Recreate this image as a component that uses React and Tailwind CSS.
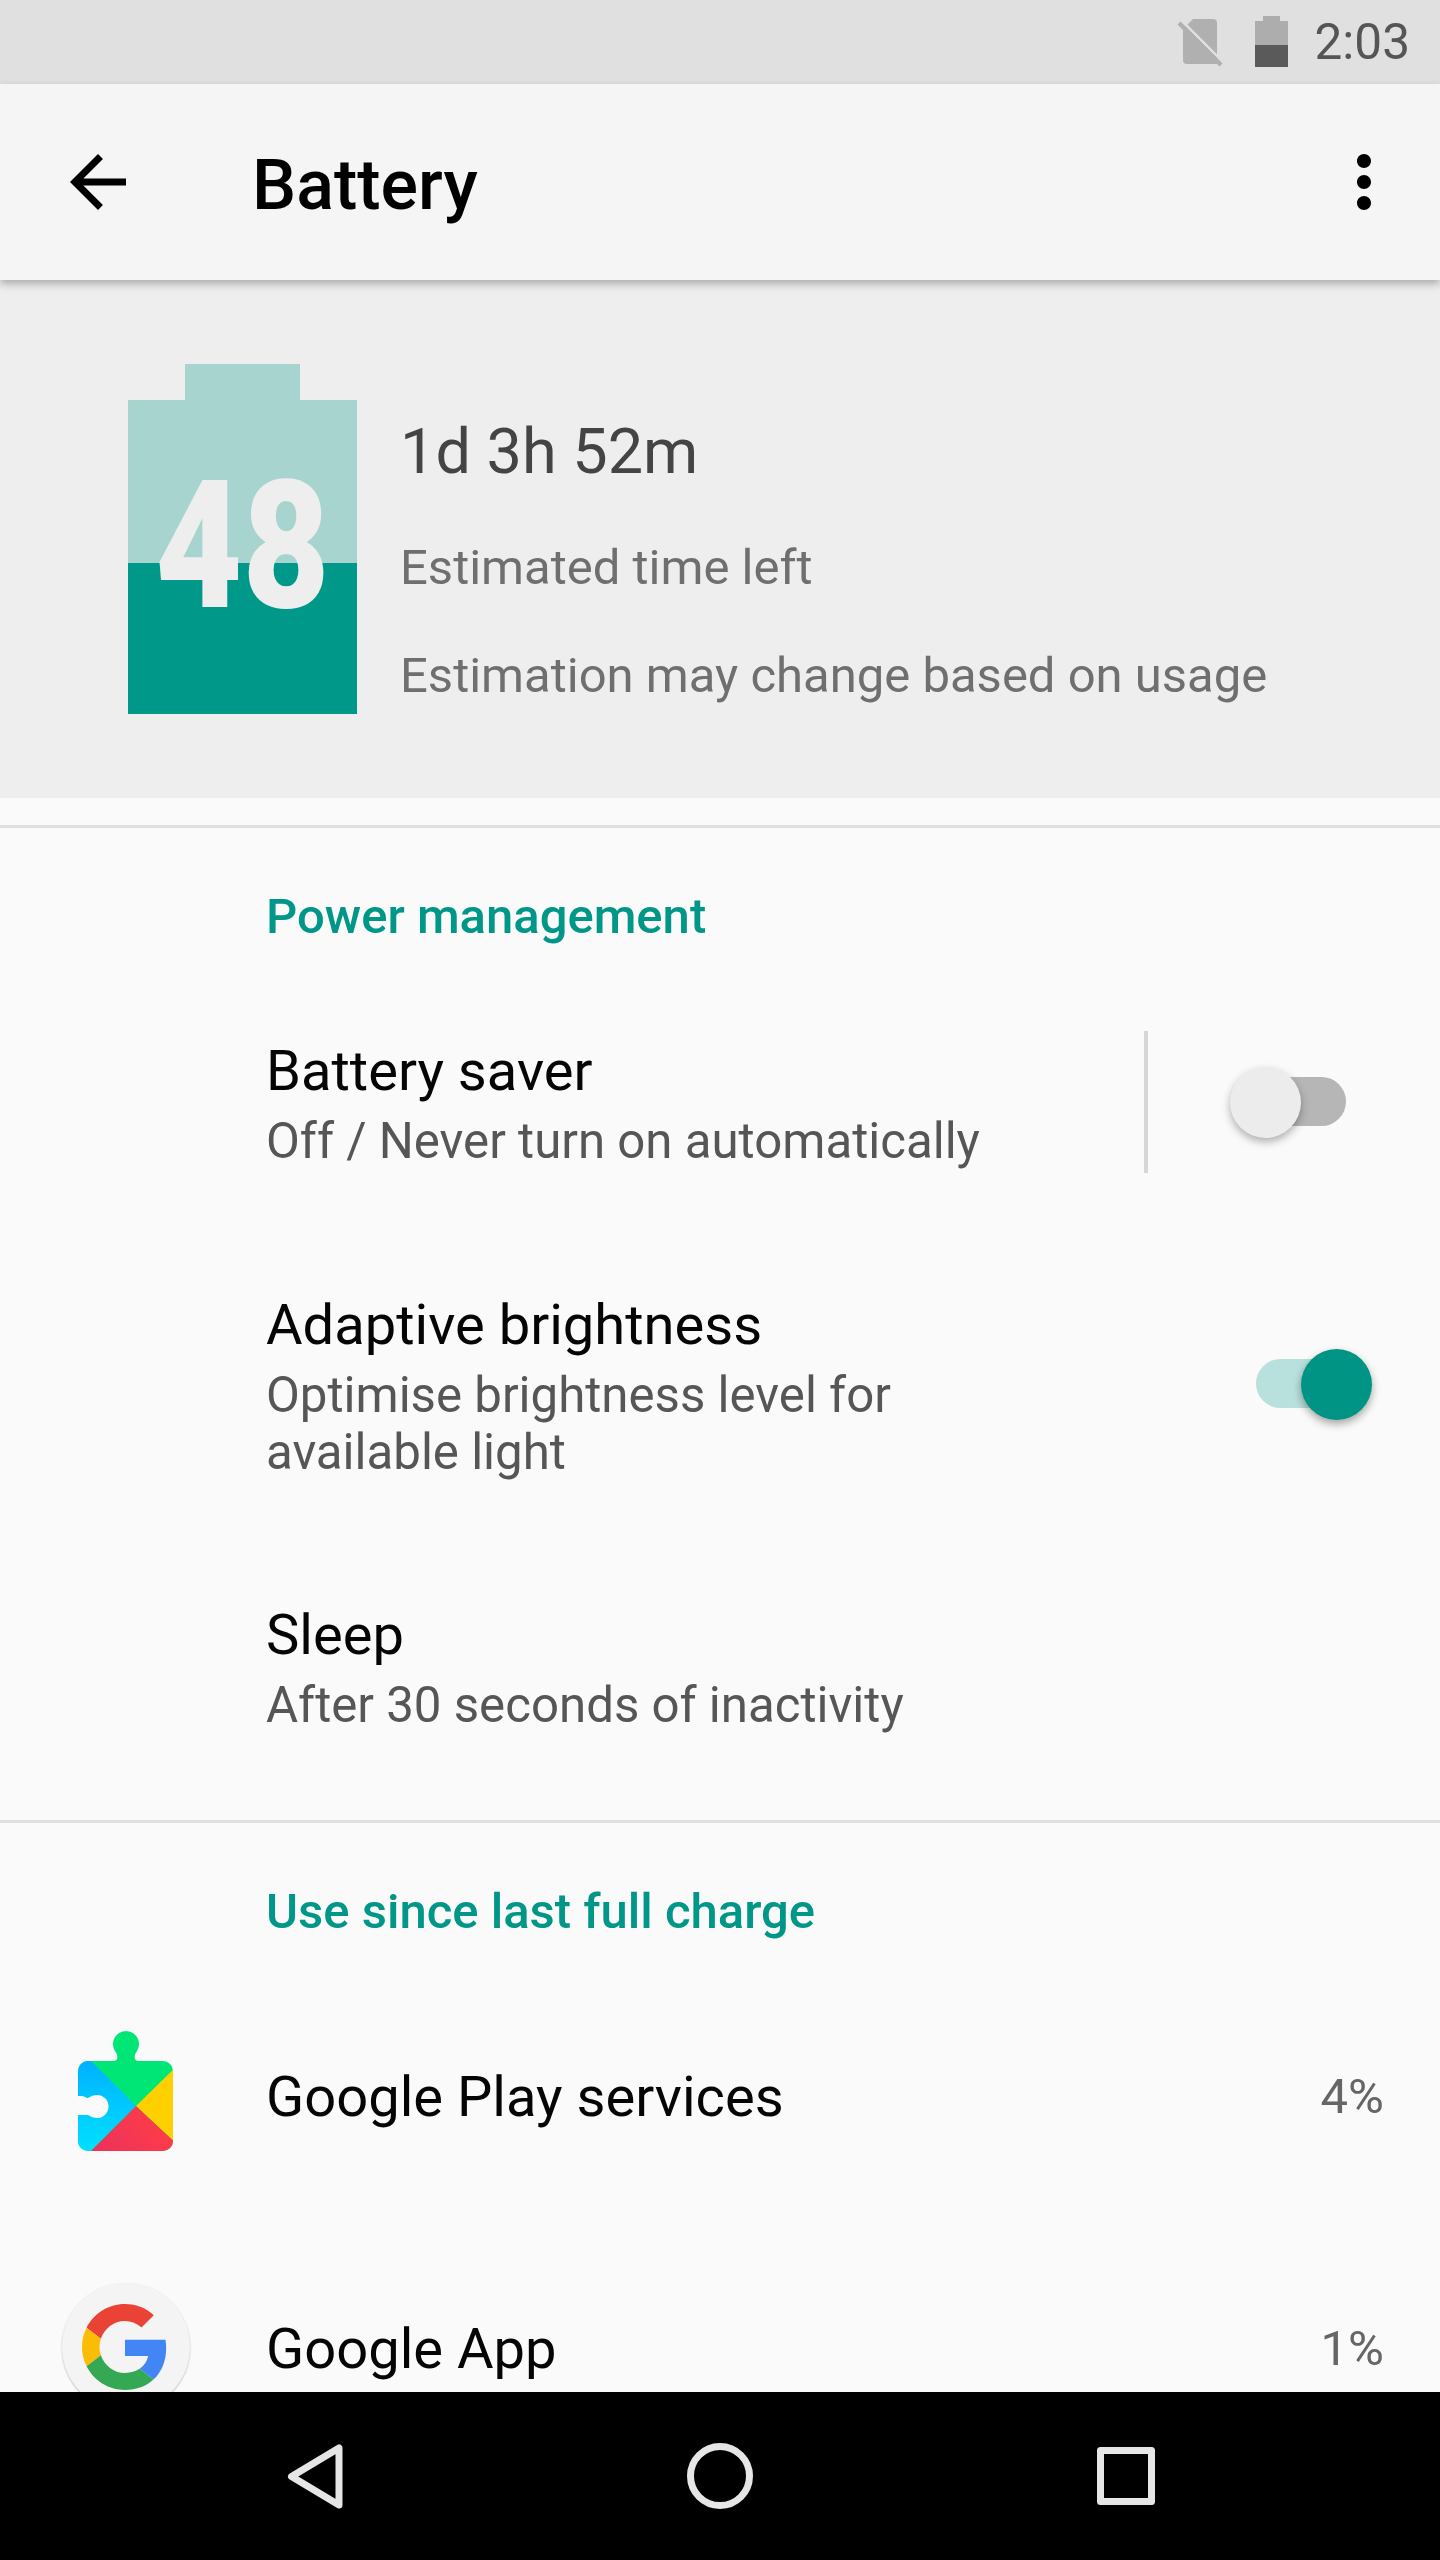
function Switch({ on }) {
  return (
    <div className="relative h-[71px] w-[116px] shrink-0">
      <div className={on ? "absolute left-0 top-[10px] h-[49px] w-[102px] rounded-full bg-[#b8e0dc]" : "absolute right-0 top-[10px] h-[49px] w-[102px] rounded-full bg-[#b6b6b6]"} />
      <div className={on ? "absolute right-0 top-0 h-[71px] w-[71px] rounded-full bg-[#009485] shadow-[0_4px_8px_rgba(0,0,0,0.35)]" : "absolute left-0 top-0 h-[71px] w-[71px] rounded-full bg-[#ececec] shadow-[0_4px_8px_rgba(0,0,0,0.3)]"} />
    </div>
  );
}

function SettingText({ title, lines }) {
  return (
    <div className="min-w-0 flex-1">
      <div className="text-[56.1px] leading-[84px] text-[#050505]">{title}</div>
      {lines.map((l) => (
        <div key={l} className="text-[49.2px] leading-[57px] text-[#565656]">{l}</div>
      ))}
    </div>
  );
}

function SectionHeader({ children }) {
  return <div className="pl-[266px] pt-[61px] text-[49px] font-medium leading-[56px] text-[#009688]">{children}</div>;
}

function Divider() {
  return <div className="h-[3px] bg-[#e0e0e0]" />;
}

function PlayIcon() {
  return (
    <svg width="180" height="180" viewBox="0 0 180 180" className="shrink-0">
      <defs>
        <clipPath id="puzzle">
          <path d="M38 70a10 10 0 0 1 10-10h25c6 0 5-6 2-10a13 13 0 1 1 22 0c-3 4-4 10 2 10h24a10 10 0 0 1 10 10v70a10 10 0 0 1-10 10H48a10 10 0 0 1-10-10Z" />
        </clipPath>
        <linearGradient id="blueg" x1="0" y1="0" x2="0" y2="1">
          <stop offset="0" stopColor="#00aeff" />
          <stop offset="1" stopColor="#00e3ff" />
        </linearGradient>
        <linearGradient id="redg" x1="0" y1="1" x2="1" y2="0.6">
          <stop offset="0" stopColor="#e8305f" />
          <stop offset="1" stopColor="#ff3d47" />
        </linearGradient>
      </defs>
      <g clipPath="url(#puzzle)">
        <rect x="30" y="25" width="110" height="130" fill="#00e676" />
        <polygon points="30,55 51,60 96,105 51,150 30,155" fill="url(#blueg)" />
        <polygon points="140,62 96,105 140,146" fill="#ffd000" />
        <polygon points="51,150 96,105 140,146 140,155 45,155" fill="url(#redg)" />
      </g>
      <path d="M36 95h5c3 0 5 2 7 2c3-2 6-3 9-3a11 11 0 0 1 0 23c-3 0-6-1-9-3-2 0-4 0-7 0h-5Z" fill="#fafafa" />
    </svg>
  );
}

function GoogleIcon() {
  return (
    <div className="flex h-[128px] w-[128px] shrink-0 items-center justify-center rounded-full bg-[#f4f4f4] shadow-[0_1px_2px_rgba(0,0,0,0.25)]">
      <svg width="86" height="86" viewBox="0 0 48 48" className="-ml-[2px]">
        <path fill="#EA4335" d="M24 9.500c3.540 0 6.710 1.220 9.210 3.600l6.850-6.850C35.900 2.380 30.470 0 24 0 14.620 0 6.510 5.380 2.560 13.220l7.980 6.190C12.430 13.720 17.740 9.500 24 9.500z" />
        <path fill="#4285F4" d="M46.980 24.550c0-1.570-.15-3.090-.38-4.550H24v9.020h12.940c-.58 2.960-2.260 5.480-4.780 7.180l7.730 6c4.510-4.180 7.090-10.360 7.090-17.650z" />
        <path fill="#FBBC05" d="M10.530 28.590c-.48-1.450-.76-2.990-.76-4.590s.27-3.140.76-4.590l-7.980-6.190C.92 16.460 0 20.120 0 24c0 3.880.92 7.540 2.560 10.780l7.970-6.190z" />
        <path fill="#34A853" d="M24 48c6.480 0 11.930-2.130 15.890-5.810l-7.730-6c-2.150 1.450-4.920 2.300-8.160 2.300-6.260 0-11.570-4.220-13.470-9.910l-7.980 6.190C6.510 42.620 14.620 48 24 48z" />
      </svg>
    </div>
  );
}

function BatteryGraphic() {
  return (
    <div className="relative h-[350px] w-[229px] shrink-0">
      <div className="mx-auto h-[36px] w-[115px] bg-[#a8d4d0]" />
      <div className="h-[163px] bg-[#a8d4d0]" />
      <div className="h-[151px] bg-[#009889]" />
      <div className="absolute left-0 right-0 top-[93px] scale-x-[0.84] text-center text-[179px] font-black leading-[179px] text-[#eeeeee]">48</div>
    </div>
  );
}

export default function App() {
  return (
    <div className="flex h-[2560px] w-[1440px] flex-col overflow-hidden bg-[#fafafa] font-['Roboto',sans-serif]">
      <div className="flex h-[84px] shrink-0 items-center justify-end bg-[#e0e0e0] pr-[30px]">
        <svg width="46" height="50" viewBox="0 0 46 50" className="mt-[2px]">
          <path d="M16 1H36a4 4 0 0 1 4 4V46H10a4 4 0 0 1-4-4V11Z" fill="#b0b0b0" />
          <path d="M4.500 2.500 46.500 44.500" stroke="#e0e0e0" strokeWidth="2.500" />
          <path d="M2 5 44 47" stroke="#b0b0b0" strokeWidth="4.500" />
        </svg>
        <svg width="33" height="51" viewBox="0 0 33 51" className="ml-[32px] mt-[-1px]">
          <path d="M8 0h17v5h8v24H0V5h8Z" fill="#adadad" />
          <rect x="0" y="29" width="33" height="22" fill="#5a5a5a" />
        </svg>
        <div className="ml-[27px] text-[49.5px] leading-[56px] text-[#555555]">2:03</div>
      </div>

      <div className="relative z-10 flex h-[196px] shrink-0 items-center bg-[#f5f5f5] pl-[56px] pr-[34px] shadow-[0_4px_8px_rgba(0,0,0,0.28)]">
        <svg width="84" height="84" viewBox="0 0 24 24">
          <path d="M20 11H7.830l5.590-5.590L12 4l-8 8 8 8 1.410-1.410L7.830 13H20v-2z" fill="#000" />
        </svg>
        <div className="ml-[112px] flex-1 pt-[6px] text-[70px] font-medium leading-[84px] text-black">Battery</div>
        <svg width="84" height="84" viewBox="0 0 24 24">
          <path d="M12 8c1.100 0 2-.9 2-2s-.9-2-2-2-2 .9-2 2 .9 2 2 2zm0 2c-1.100 0-2 .9-2 2s.9 2 2 2 2-.9 2-2-.9-2-2-2zm0 6c-1.100 0-2 .9-2 2s.9 2 2 2 2-.9 2-2-.9-2-2-2z" fill="#000" />
        </svg>
      </div>

      <div className="min-h-0 flex-1 overflow-hidden">
        <div className="flex h-[518px] items-start bg-[#eeeeee] pl-[128px] pt-[84px]">
          <BatteryGraphic />
          <div className="ml-[43px] pt-[51px]">
            <div className="text-[63px] leading-[74px] text-[#444444]">1d 3h 52m</div>
            <div className="mt-[51px] text-[49px] leading-[56px] text-[#6f6f6f]">Estimated time left</div>
            <div className="mt-[52px] text-[49px] leading-[56px] text-[#6f6f6f]">Estimation may change based on usage</div>
          </div>
        </div>
        <div className="h-[27px]" />
        <Divider />
        <SectionHeader>Power management</SectionHeader>

        <div className="mt-[81px] flex items-center pl-[266px] pr-[94px]">
          <SettingText title="Battery saver" lines={["Off / Never turn on automatically"]} />
          <div className="mt-[5px] h-[142px] w-[4px] shrink-0 bg-[#d6d6d6]" />
          <div className="ml-[82px] mt-[5px]"><Switch on={false} /></div>
        </div>

        <div className="mt-[110px] flex items-center pl-[266px] pr-[68px]">
          <SettingText title="Adaptive brightness" lines={["Optimise brightness level for", "available light"]} />
          <div className="mt-[5px]"><Switch on={true} /></div>
        </div>

        <div className="mt-[112px] pl-[266px]">
          <SettingText title="Sleep" lines={["After 30 seconds of inactivity"]} />
        </div>

        <div className="h-[86px]" />
        <Divider />
        <SectionHeader>Use since last full charge</SectionHeader>

        <div className="mt-[31px] flex h-[252px] items-center pr-[56px]">
          <div className="-mt-[12px] ml-[40px] mr-[46px] h-[180px] w-[180px] shrink-0"><PlayIcon /></div>
          <div className="flex-1 text-[56.1px] text-[#050505]">Google Play services</div>
          <div className="text-[49px] text-[#666666]">4%</div>
        </div>

        <div className="flex h-[252px] items-center pr-[56px]">
          <div className="ml-[62px] mr-[76px] mt-[-4px]"><GoogleIcon /></div>
          <div className="flex-1 text-[56.1px] text-[#050505]">Google App</div>
          <div className="text-[49px] text-[#666666]">1%</div>
        </div>
      </div>

      <div className="flex h-[168px] shrink-0 items-center bg-black pl-[287px]">
        <svg width="56" height="65" viewBox="0 0 56 65" fill="none" stroke="#e6e6e6" strokeWidth="7" strokeLinejoin="round">
          <path d="M52 4V61L4.500 32.500Z" />
        </svg>
        <svg width="66" height="66" viewBox="0 0 66 66" fill="none" stroke="#e6e6e6" strokeWidth="7" className="ml-[344px]">
          <circle cx="33" cy="33" r="29.500" />
        </svg>
        <svg width="58" height="58" viewBox="0 0 58 58" fill="none" stroke="#e6e6e6" strokeWidth="7" strokeLinejoin="round" className="ml-[344px]">
          <rect x="3.500" y="3.500" width="51" height="51" />
        </svg>
      </div>
    </div>
  );
}
